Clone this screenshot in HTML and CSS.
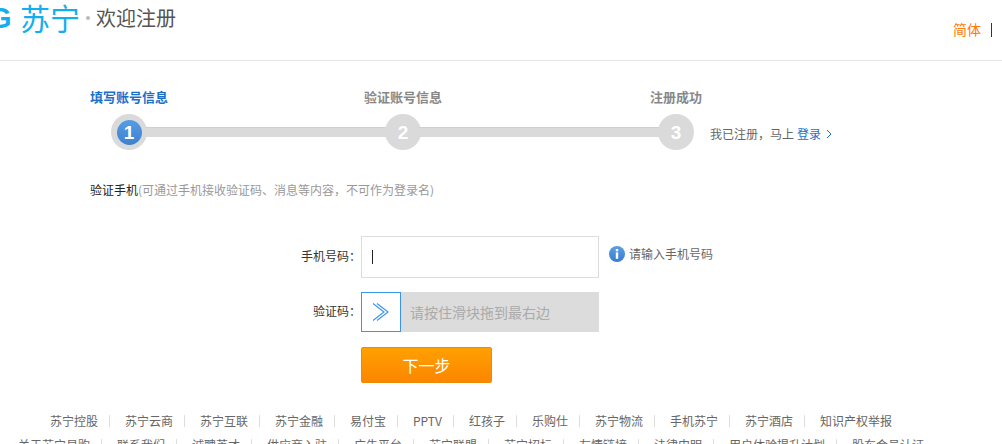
FILE: index.html
```html
<!DOCTYPE html>
<html lang="zh-CN">
<head>
<meta charset="utf-8">
<title>欢迎注册</title>
<link rel="stylesheet" href="styles.css">
</head>
<body>
<header class="header">
  <div class="brand">
    <span class="logo-g">G</span>
    <span class="logo-cn">苏宁</span>
    <span class="logo-dot"></span>
    <h1 class="welcome">欢迎注册</h1>
  </div>
  <div class="lang"><a class="lang-link">简体</a><span class="lang-sep"></span></div>
</header>

<section class="stepper">
  <div class="step-label active">填写账号信息</div>
  <div></div>
  <div class="step-label">验证账号信息</div>
  <div></div>
  <div class="step-label">注册成功</div>
  <div></div>

  <div class="circle"><span class="current">1</span></div>
  <div class="bar"></div>
  <div class="circle">2</div>
  <div class="bar"></div>
  <div class="circle">3</div>
  <div class="login-hint">我已注册，马上 <a class="login-link">登录</a>
    <svg class="chev" width="6" height="10" viewBox="0 0 6 10"><path d="M1 1l4 4-4 4" fill="none" stroke="#1a6fc9" stroke-width="1"/></svg>
  </div>
</section>

<p class="section-title">验证手机<span class="section-note">(可通过手机接收验证码、消息等内容，不可作为登录名)</span></p>

<form class="form">
  <label class="form-label">手机号码：</label>
  <div class="input-row">
    <div class="input"><span class="caret"></span></div>
    <div class="tip">
      <svg width="16" height="16" viewBox="0 0 16 16"><defs><linearGradient id="tipg" x1="0" y1="0" x2="0" y2="1"><stop offset="0" stop-color="#5b9fe4"/><stop offset="1" stop-color="#3a7ccb"/></linearGradient></defs><circle cx="8" cy="8" r="8" fill="url(#tipg)"/><rect x="6.8" y="3" width="2.4" height="2.3" fill="#fff"/><rect x="6.8" y="6.4" width="2.4" height="6.4" fill="#fff"/></svg>
      <span>请输入手机号码</span>
    </div>
  </div>
  <label class="form-label slider-label">验证码：</label>
  <div class="slider">
    <div class="handle">
      <svg width="18" height="18" viewBox="0 0 18 18"><path d="M1 .5L12 9 1 17.5M5 .5L16 9 5 17.5" fill="none" stroke="#3a94ea" stroke-width="1.1"/></svg>
    </div>
    <span class="slider-text">请按住滑块拖到最右边</span>
  </div>
  <div></div>
  <button class="next" type="button">下一步</button>
</form>

<footer class="footer">
  <ul class="links">
    <li>苏宁控股</li><li>苏宁云商</li><li>苏宁互联</li><li>苏宁金融</li><li>易付宝</li><li>PPTV</li><li>红孩子</li><li>乐购仕</li><li>苏宁物流</li><li>手机苏宁</li><li>苏宁酒店</li><li>知识产权举报</li>
  </ul>
  <ul class="links">
    <li>关于苏宁易购</li><li>联系我们</li><li>诚聘英才</li><li>供应商入驻</li><li>广告平台</li><li>苏宁联盟</li><li>苏宁招标</li><li>友情链接</li><li>法律申明</li><li>用户体验提升计划</li><li>股东会员认证</li>
  </ul>
</footer>
</body>
</html>
```
FILE: styles.css
```css
* { box-sizing: border-box; }
html, body { margin: 0; height: 444px; overflow: hidden; background: #fff; }
body { font: 12px/1.5 "Noto Sans CJK SC", "Liberation Sans", sans-serif; color: #333; }

.header {
  height: 61px;
  border-bottom: 1px solid #e6e6e6;
  display: flex;
  justify-content: space-between;
}
.brand { display: flex; align-items: center; height: 36px; margin-left: -11px; }
.logo-g { font: 700 29px/36px "Liberation Sans", sans-serif; color: #14aeee; width: 31px; }
.logo-cn { font-size: 30px; font-weight: 400; line-height: 36px; color: #14aeee; width: 60px; margin-top: -2px; }
.logo-dot { width: 4px; height: 4px; border-radius: 50%; background: #bbb; margin: 0 6px; }
.welcome { margin: 0; font-size: 20px; line-height: 36px; font-weight: 400; color: #555; }

.lang { display: flex; align-items: center; height: 59px; padding-right: 10px; }
.lang-link { font-size: 14px; color: #ff7a00; }
.lang-sep { width: 1px; height: 14px; background: #4a2a2a; margin-left: 10px; }

.stepper {
  display: grid;
  grid-template-columns: 36px 238px 36px 237px 36px auto;
  grid-template-rows: 20px 36px;
  row-gap: 7px;
  justify-content: start;
  align-items: center;
  margin: 26px 0 0 111px;
}
.step-label { justify-self: center; white-space: nowrap; font-size: 13px; font-weight: 700; color: #888; }
.step-label.active { color: #1a6fc9; }
.circle {
  width: 36px; height: 36px; border-radius: 50%;
  background: #dadada;
  display: flex; align-items: center; justify-content: center;
  font: 700 19px/1 "Liberation Sans", sans-serif; color: #fff;
}
.current {
  width: 25px; height: 25px; border-radius: 50%;
  background: linear-gradient(#559de6, #3f80cd);
  display: flex; align-items: center; justify-content: center;
}
.bar { height: 10px; margin: 0 -2px; background: #dadada; border-top: 1px solid #cfcfcf; }
.login-hint { margin-left: 16px; padding-top: 3px; color: #666; white-space: nowrap; display: flex; align-items: center; }
.login-link { color: #1a6fc9; margin-left: 3px; }
.chev { margin-left: 5px; }

.section-title { margin: 31px 0 0 90px; color: #222; line-height: 18px; }
.section-note { color: #999; }

.form {
  display: grid;
  grid-template-columns: 361px auto;
  justify-content: start;
  align-items: center;
  margin-top: 37px;
}
.form-label { text-align: right; color: #333; padding-bottom: 2px; }
.slider-label { margin-top: 14px; }
.input-row { display: flex; align-items: center; }
.input {
  width: 238px; height: 42px;
  border: 1px solid #ddd;
  display: flex; align-items: center;
  padding-left: 10px;
}
.caret { width: 1px; height: 14px; background: #222; }
.tip { display: flex; align-items: center; gap: 4px; margin: 0 0 6px 10px; color: #666; }
.slider {
  margin-top: 14px;
  width: 238px; height: 40px;
  background: #dcdcdc;
  display: flex; align-items: center;
}
.handle {
  width: 40px; height: 40px;
  background: #fff; border: 1px solid #3a94ea;
  display: flex; align-items: center; justify-content: center;
}
.slider-text { margin-left: 9px; font-size: 14px; color: #aaa; }
.next {
  margin-top: 15px;
  width: 131px; height: 36px;
  border: 1px solid #f08a00;
  border-radius: 2px;
  background: linear-gradient(#ffa000, #fb8600);
  color: #fff;
  font: 16px/1 "Noto Sans CJK SC", sans-serif;
  padding: 0;
  cursor: pointer;
}

.footer { margin-top: 26px; width: 942px; }
.links {
  list-style: none;
  margin: 0; padding: 0;
  display: flex;
  justify-content: center;
  height: 24px;
  line-height: 24px;
  color: #666;
  white-space: nowrap;
}
.links li { display: flex; align-items: center; }
.links li + li::before {
  content: "";
  width: 1px; height: 12px;
  background: #ddd;
  margin: 0 15px 0 11px;
}
```
